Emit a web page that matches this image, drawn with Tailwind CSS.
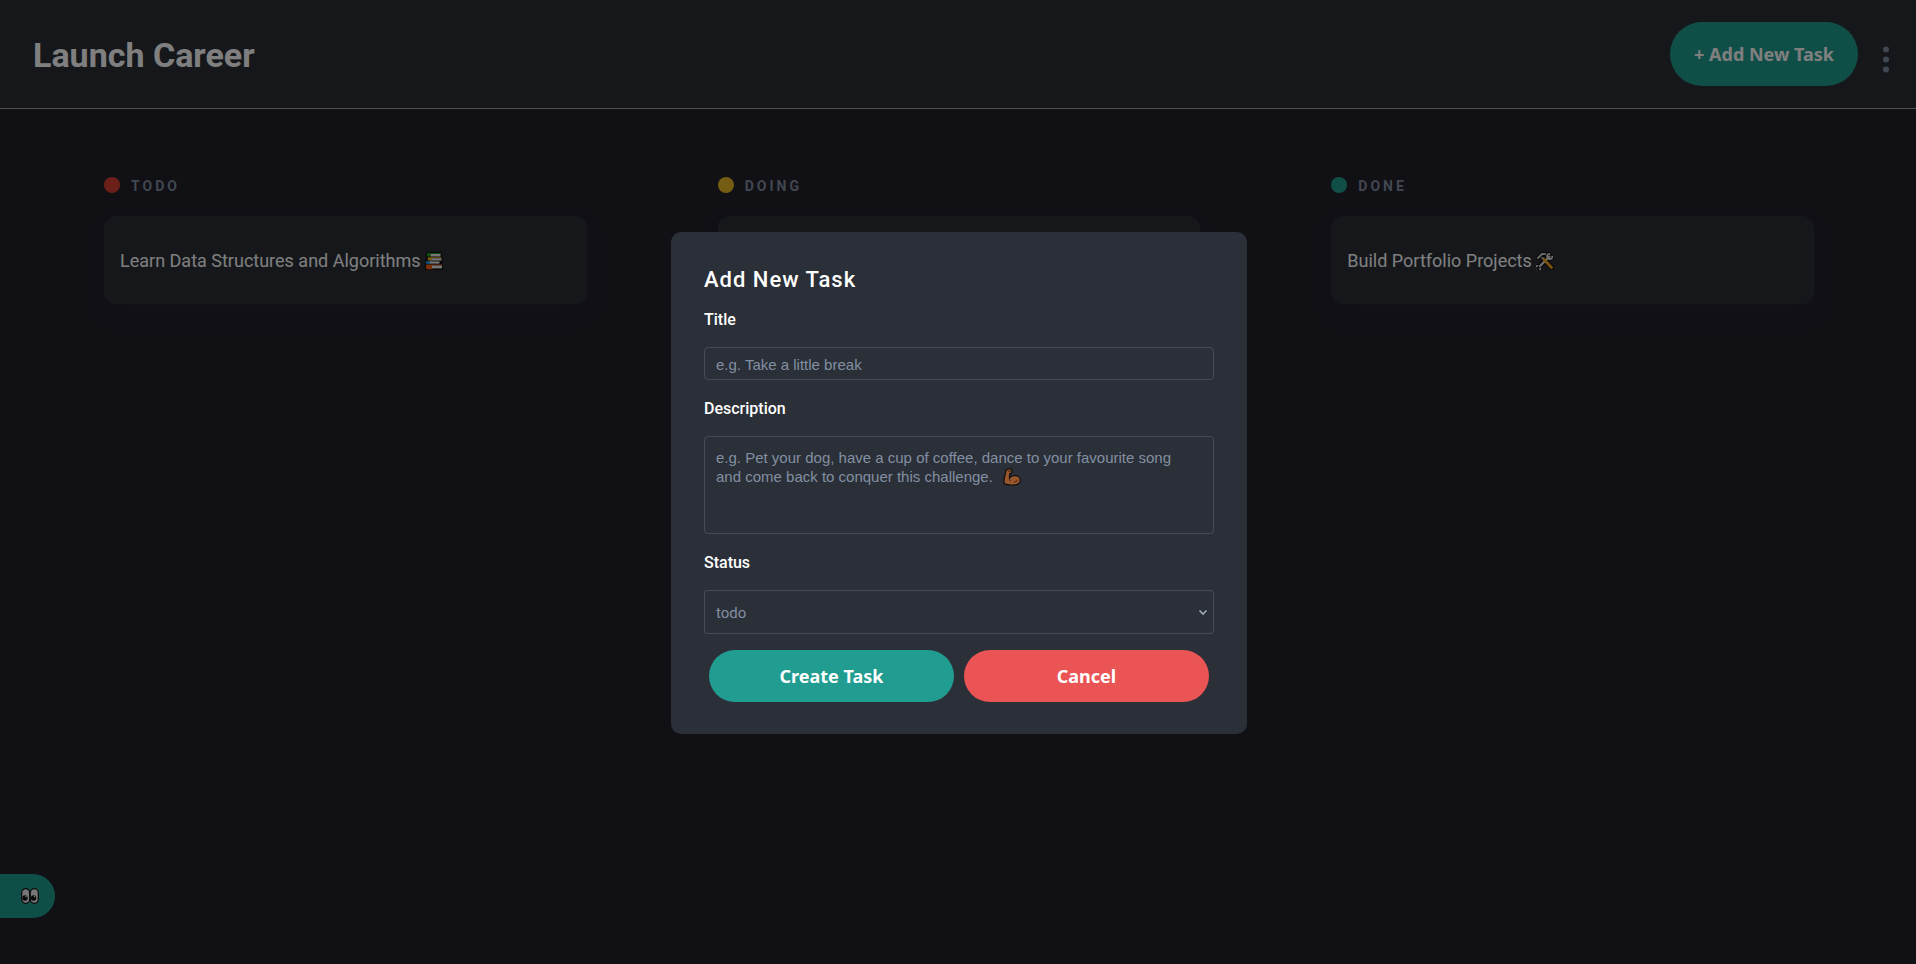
<!DOCTYPE html>
<html lang="en">
<head>
<meta charset="utf-8">
<meta name="viewport" content="width=device-width, initial-scale=1">
<title>Launch Career</title>
<script src="https://cdn.jsdelivr.net/npm/@tailwindcss/browser@4"></script>
</head>
<body class="flex min-h-screen flex-col bg-[#22202b] font-['Roboto','Noto_Sans',sans-serif] text-white">

  <header class="flex items-center justify-between border-b border-[#a0a0a0] bg-[#2b2f37] py-[22px] pr-6 pl-[33px]">
    <h1 class="pt-0.5 text-[34px] leading-[62px] font-bold">Launch Career</h1>
    <div class="flex items-center gap-[22px]">
      <button type="button" class="h-16 rounded-full bg-[#219c90] px-6 font-['Noto_Sans',sans-serif] text-lg font-bold whitespace-nowrap">+ Add New Task</button>
      <button type="button" aria-label="Board options" class="pt-[11px]">
        <svg class="block h-7 w-3 fill-[#828fa3]" viewBox="0 0 12 28"><circle cx="6" cy="3.500" r="3"/><circle cx="6" cy="13.500" r="3"/><circle cx="6" cy="23.500" r="3"/></svg>
      </button>
    </div>
  </header>

  <main class="grid flex-1 grid-cols-3 content-start gap-x-[131px] pt-[67px] pr-[102px] pl-[104px]">
    <section>
      <h2 class="flex items-center gap-[11px] text-sm leading-5 font-bold tracking-[3px] text-[#828fa3]"><span class="-mt-0.5 size-4 rounded-full bg-[#d83f31]"></span>TODO</h2>
      <article class="mt-5 flex h-[88px] items-center gap-1 rounded-xl bg-[#2b2f37] px-4 pt-0.5 shadow-[0_10px_20px_rgba(54,64,96,0.08)]">
        <h3 class="text-lg">Learn Data Structures and Algorithms</h3>
        <svg class="size-[18px] shrink-0" viewBox="0 0 18 18" aria-hidden="true">
          <path d="M2 0h15v5h.5v7.500h.5V18H.5L0 17v-5l1-1-.7-1V7.500L1.500 6 1 5V1.500z" fill="#111"/>
          <path d="M2.500 1h13.500v1H5.500v2.500H2.500L2 4V1.500z" fill="#16a016"/>
          <path d="M5.500 2h10v2.500h-10z" fill="#eee"/>
          <path d="M3 5.300h13.500v1H7v2.200H3.500L2.500 8z" fill="#f2ab1d"/>
          <path d="M6.500 6.300h10v2.200h-10z" fill="#eee"/>
          <path d="M1.500 8.900H6v3.200H2l-1-.8V9.300z" fill="#2493e8"/>
          <path d="M5 9.400h9.500v2.200H5z" fill="#eee"/>
          <path d="M1.500 12.600h15.700v1H7.500v3.700H1.700l-.7-1v-3.500z" fill="#f76516"/>
          <path d="M7 13.500h10v2.900H7z" fill="#eee"/>
        </svg>
      </article>
    </section>

    <section>
      <h2 class="flex items-center gap-[11px] text-sm leading-5 font-bold tracking-[3px] text-[#828fa3]"><span class="-mt-0.5 size-4 rounded-full bg-[#e9b824]"></span>DOING</h2>
      <article class="mt-5 h-[88px] rounded-xl bg-[#2b2f37] shadow-[0_10px_20px_rgba(54,64,96,0.08)]"></article>
    </section>

    <section>
      <h2 class="flex items-center gap-[11px] text-sm leading-5 font-bold tracking-[3px] text-[#828fa3]"><span class="-mt-0.5 size-4 rounded-full bg-[#219c90]"></span>DONE</h2>
      <article class="mt-5 flex h-[88px] items-center gap-1 rounded-xl bg-[#2b2f37] px-4 pt-0.5 shadow-[0_10px_20px_rgba(54,64,96,0.08)]">
        <h3 class="text-lg">Build Portfolio Projects</h3>
        <svg class="size-[18px] shrink-0" viewBox="0 0 18 18" aria-hidden="true" fill="none" stroke-linecap="round" stroke-linejoin="round">
          <g stroke="#111">
            <path d="M4 14 13.500 4.500" stroke-width="4.800"/>
            <path d="M13.500 1.800a2.600 2.600 0 1 0 2.800 2.700M1.500 13.800a2.600 2.600 0 1 0 2.800 2.700" stroke-width="3.600"/>
            <path d="M7 6.500 15.500 15.500" stroke-width="5"/>
            <path d="M2 6 6 2h3" stroke-width="4.400"/>
          </g>
          <path d="M4 14 13.500 4.500" stroke="#ddd" stroke-width="2.200"/>
          <path d="M13.500 1.800a2.600 2.600 0 1 0 2.800 2.700M1.500 13.800a2.600 2.600 0 1 0 2.800 2.700" stroke="#ddd" stroke-width="1.800"/>
          <path d="M6.500 6 8 7.500" stroke="#bbb" stroke-width="2.400"/>
          <path d="M8 7.500 15.500 15.500" stroke="#f4a81c" stroke-width="2.800"/>
          <path d="M2 6 6 2h3" stroke="#ccc" stroke-width="2.200"/>
        </svg>
      </article>
    </section>
  </main>

  <button type="button" aria-label="Show sidebar" class="fixed bottom-[46px] left-0 flex h-11 w-[55px] items-center justify-end rounded-r-full bg-[#219c90] pr-4">
    <svg class="size-[18px]" viewBox="0 0 18 18" aria-hidden="true">
      <rect x=".7" y="1.700" width="8" height="14.600" rx="4" fill="#eee" stroke="#111" stroke-width="1.200"/>
      <rect x="9.300" y="1.700" width="8" height="14.600" rx="4" fill="#eee" stroke="#111" stroke-width="1.200"/>
      <circle cx="4" cy="11" r="2.700" fill="#111"/><circle cx="12.600" cy="11" r="2.700" fill="#111"/>
      <circle cx="5" cy="9.800" r=".8" fill="#eee"/><circle cx="13.600" cy="9.800" r=".8" fill="#eee"/>
    </svg>
  </button>

  <div class="fixed inset-0 flex items-center justify-center bg-black/50 pt-0.5 pl-0.5">
    <form role="dialog" aria-modal="true" aria-labelledby="dialog-title" class="flex w-full max-w-[576px] flex-col rounded-[10px] bg-[#2b2f37] px-[33px] pt-[31px] pb-8">
      <h2 id="dialog-title" class="text-[22px] leading-[34px] font-medium tracking-[1px]">Add New Task</h2>

      <label for="title" class="mt-2.5 text-base leading-[26px] font-medium">Title</label>
      <input id="title" type="text" placeholder="e.g. Take a little break" class="mt-3.5 h-[33px] rounded border border-[#828fa3]/30 bg-transparent px-[11px] pt-0.5 font-['Liberation_Sans',sans-serif] text-[15px] placeholder:text-[#828fa3] focus:outline-none">

      <label for="description" class="mt-4 text-base leading-[26px] font-medium">Description</label>
      <div class="relative mt-3.5 flex">
        <textarea id="description" placeholder="e.g. Pet your dog, have a cup of coffee, dance to your favourite song and come back to conquer this challenge." class="h-[98px] w-full resize-none rounded border border-[#828fa3]/30 bg-transparent py-[11px] pr-7 pl-[11px] font-['Liberation_Sans',sans-serif] text-[15px] leading-[19px] placeholder:text-[#828fa3] focus:outline-none"></textarea>
        <svg class="pointer-events-none absolute top-8 left-[299px] size-[18px]" viewBox="0 0 18 18" aria-hidden="true">
          <path d="M5 .8 8.200.7 9 2.500 8.700 5 6.700 5.600 6.500 10.200C8 8 10.500 7.300 13 7.700c3 .5 4.700 2.800 4.300 5.300-.5 3-3.500 4.200-8 4.200-3.500 0-6-.5-8-1.500C.3 14 1 11 1.700 8L3 2.500z" fill="#99572b" stroke="#111" stroke-width="1.300" stroke-linejoin="round"/>
          <path d="M5.500 3.200 8 3M6.500 10.200c-.3 1 0 2 .8 2.800M11.500 14c1.500 0 2.700-.7 3-2" fill="none" stroke="#2c170b" stroke-width=".9" stroke-linecap="round"/>
        </svg>
      </div>

      <label for="status" class="mt-4 text-base leading-[26px] font-medium">Status</label>
      <div class="relative mt-3.5 flex">
        <select id="status" class="h-11 w-full appearance-none rounded border border-[#828fa3]/30 bg-[#2b2f37] px-[11px] pt-0.5 font-['Roboto',sans-serif] text-[15px] text-[#828fa3] focus:outline-none">
          <option>todo</option>
          <option>doing</option>
          <option>done</option>
        </select>
        <svg class="pointer-events-none absolute top-[19px] right-1.5 h-[7px] w-[10px] fill-none stroke-[#a0abbb]" viewBox="0 0 10 7" aria-hidden="true"><path d="M1.500 1.500 5 5l3.500-3.500" stroke-width="1.600"/></svg>
      </div>

      <div class="mt-4 grid grid-cols-2 gap-2.5 px-[5px] font-['Noto_Sans',sans-serif] text-lg font-bold">
        <button type="submit" class="h-[52px] rounded-full bg-[#219c90]">Create Task</button>
        <button type="button" class="h-[52px] rounded-full bg-[#ea5455]">Cancel</button>
      </div>
    </form>
  </div>
</body>
</html>
